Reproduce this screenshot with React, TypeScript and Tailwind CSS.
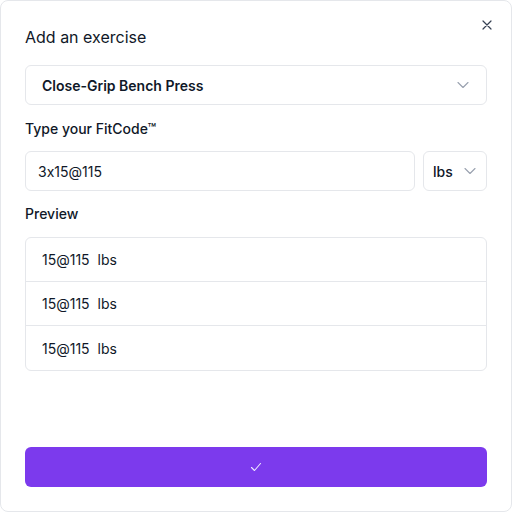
import React from 'react'

const Chevron: React.FC = () => (
  <svg width="14" height="14" viewBox="0 0 14 14" fill="none" className="text-gray-400">
    <path d="M2 4.5l5 5 5-5" stroke="currentColor" strokeWidth="1.1" strokeLinecap="round" strokeLinejoin="round" />
  </svg>
)

const App: React.FC = () => {
  const rows = ['15@115  lbs', '15@115  lbs', '15@115  lbs']
  return (
    <div
      className="w-[512px] h-[512px] bg-white"
      style={{ fontFamily: 'Inter, "Noto Sans", sans-serif', fontFeatureSettings: '"calt" 0' }}
    >
      <div className="relative h-full border border-gray-200 rounded-lg flex flex-col px-6 pt-6 pb-6">
        {/* Close button */}
        <button className="absolute top-[16px] right-[16px] w-4 h-4 flex items-center justify-center text-gray-700">
          <svg width="10" height="10" viewBox="0 0 10 10" fill="none">
            <path d="M1 1l8 8M9 1l-8 8" stroke="currentColor" strokeWidth="1.2" strokeLinecap="round" />
          </svg>
        </button>

        <h2 className="text-[16px] leading-6 text-gray-900">Add an exercise</h2>

        {/* Exercise select */}
        <div className="mt-4 h-10 border border-gray-200 rounded-md flex items-center justify-between pl-4 pr-4">
          <span className="text-[14px] font-semibold text-gray-900">Close-Grip Bench Press</span>
          <Chevron />
        </div>

        <label className="mt-3 text-[14px] leading-6 font-medium text-gray-900">Type your FitCode™</label>

        <div className="mt-[10px] flex gap-2">
          <div className="flex-1 h-10 border border-gray-200 rounded-md flex items-center px-3">
            <span className="text-[14px] text-gray-900">3x15@115</span>
          </div>
          <div className="w-16 h-10 border border-gray-200 rounded-md flex items-center justify-between pl-[9px] pr-[9px]">
            <span className="text-[14px] font-medium text-gray-900">lbs</span>
            <Chevron />
          </div>
        </div>

        <label className="mt-[11px] text-[14px] leading-6 font-medium text-gray-900">Preview</label>

        {/* Preview list */}
        <div className="mt-[11px] border border-gray-200 rounded-md divide-y divide-gray-200">
          {rows.map((r, i) => (
            <div key={i} className="h-11 flex items-center px-4 text-[14px] text-gray-900 whitespace-pre">
              {r}
            </div>
          ))}
        </div>

        <div className="flex-1" />

        <button className="h-10 w-full rounded-md bg-[#7c3aed] flex items-center justify-center text-violet-100">
          <svg width="12" height="12" viewBox="0 0 12 12" fill="none">
            <path d="M1.5 6.5l3 3 6-7" stroke="currentColor" strokeWidth="1.1" strokeLinecap="round" strokeLinejoin="round" />
          </svg>
        </button>
      </div>
    </div>
  )
}

export default App
